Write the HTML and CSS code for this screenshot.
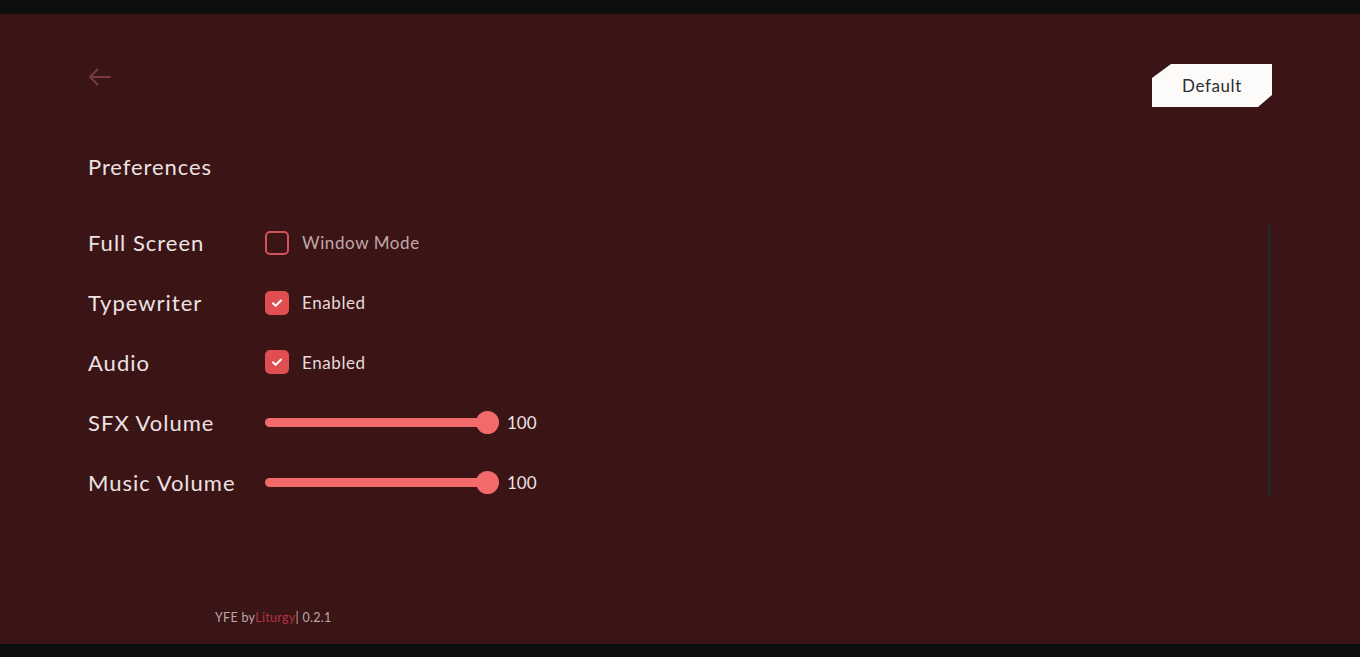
FILE: index.html
```html
<!DOCTYPE html>
<html lang="en">
<head>
<meta charset="utf-8">
<title>Preferences</title>
<link rel="stylesheet" href="styles.css">
</head>
<body>
<div class="bar bar-top"></div>
<main class="screen">
  <header class="header">
    <button class="back" aria-label="Back">
      <svg width="24" height="18" viewBox="0 0 24 18" fill="none" stroke="currentColor" stroke-width="2" stroke-linecap="round" stroke-linejoin="round"><path d="M22 9H2M9.5 1.5L2 9l7.5 7.5"/></svg>
    </button>
    <button class="default-btn">Default</button>
  </header>
  <h1 class="title">Preferences</h1>
  <section class="settings">
    <div class="list">
      <div class="row">
        <span class="label">Full Screen</span>
        <div class="control">
          <span class="check"></span>
          <span class="opt opt-off">Window Mode</span>
        </div>
      </div>
      <div class="row">
        <span class="label">Typewriter</span>
        <div class="control">
          <span class="check checked"><svg width="14" height="14" viewBox="0 0 14 14" fill="none" stroke="#fff" stroke-width="2" stroke-linecap="round" stroke-linejoin="round"><path d="M3 7.3l2.6 2.6L11 4.5"/></svg></span>
          <span class="opt">Enabled</span>
        </div>
      </div>
      <div class="row">
        <span class="label">Audio</span>
        <div class="control">
          <span class="check checked"><svg width="14" height="14" viewBox="0 0 14 14" fill="none" stroke="#fff" stroke-width="2" stroke-linecap="round" stroke-linejoin="round"><path d="M3 7.3l2.6 2.6L11 4.5"/></svg></span>
          <span class="opt">Enabled</span>
        </div>
      </div>
      <div class="row">
        <span class="label">SFX Volume</span>
        <div class="control">
          <div class="slider"><div class="track"></div><div class="thumb"></div></div>
          <span class="value">100</span>
        </div>
      </div>
      <div class="row">
        <span class="label">Music Volume</span>
        <div class="control">
          <div class="slider"><div class="track"></div><div class="thumb"></div></div>
          <span class="value">100</span>
        </div>
      </div>
    </div>
    <div class="scrollbar"></div>
  </section>
  <footer class="footer">YFE by<span class="author">Liturgy</span>| 0.2.1</footer>
</main>
<div class="bar bar-bottom"></div>
</body>
</html>
```
FILE: styles.css
```css
* { box-sizing: border-box; }
html, body { margin: 0; padding: 0; }
body {
  width: 1360px;
  height: 657px;
  overflow: hidden;
  background: #0e0e0f;
  font-family: Lato, "Open Sans", "Liberation Sans", sans-serif;
  display: flex;
  flex-direction: column;
}
.bar { background: #0e0e0f; flex: none; }
.bar-top { height: 14px; }
.bar-bottom { height: 13px; }
.screen {
  height: 630px;
  background: #3b1416;
  padding: 50px 88px 18px 88px;
  display: flex;
  flex-direction: column;
}
.header {
  display: flex;
  justify-content: space-between;
  align-items: flex-start;
}
.back {
  background: none;
  border: 0;
  padding: 0;
  margin-top: 4px;
  color: #7a3a3f;
  display: flex;
  width: 24px;
  height: 18px;
}
.default-btn {
  width: 120px;
  height: 43px;
  border: 0;
  background: #fdfbfa;
  color: #2e2e2e;
  font-family: inherit;
  font-size: 17px;
  letter-spacing: 0.6px;
  clip-path: polygon(19px 0, 100% 0, 100% 31px, 106px 100%, 0 100%, 0 14px);
  padding: 0;
}
.title {
  margin: 45px 0 31px 0;
  font-size: 22px;
  line-height: 30px;
  font-weight: 400;
  letter-spacing: 0.9px;
  color: #ece2e2;
}
.settings {
  display: flex;
}
.list {
  flex: 1;
  display: flex;
  flex-direction: column;
}
.row {
  height: 59.8px;
  display: flex;
  align-items: center;
}
.label {
  width: 177px;
  font-size: 22px;
  letter-spacing: 1px;
  color: #ece2e2;
}
.control {
  display: flex;
  align-items: center;
}
.check {
  width: 24px;
  height: 24px;
  border-radius: 5px;
  border: 2px solid #d4525a;
  margin-right: 13px;
  display: flex;
  align-items: center;
  justify-content: center;
}
.check.checked {
  background: #e14e52;
  border-color: #e14e52;
}
.opt {
  font-size: 17px;
  letter-spacing: 0.6px;
  color: #e6dcdc;
}
.opt-off { color: #c2a8aa; }
.slider {
  position: relative;
  width: 234px;
  height: 23px;
  display: flex;
  align-items: center;
  margin-right: 8px;
}
.track {
  width: 100%;
  height: 9px;
  border-radius: 5px;
  background: #f26a6a;
}
.thumb {
  position: absolute;
  right: 0;
  top: 0;
  width: 23px;
  height: 23px;
  border-radius: 50%;
  background: #f26a6a;
}
.value {
  font-size: 17px;
  color: #ece2e2;
}
.scrollbar {
  width: 3px;
  margin: 12px 1px 16px 0;
  border-radius: 2px;
  background: #262426;
}
.footer {
  margin-top: auto;
  margin-left: 127px;
  font-size: 12.5px;
  line-height: 16px;
  letter-spacing: 0.3px;
  color: #b8a9aa;
}
.author { color: #b23540; }
```
